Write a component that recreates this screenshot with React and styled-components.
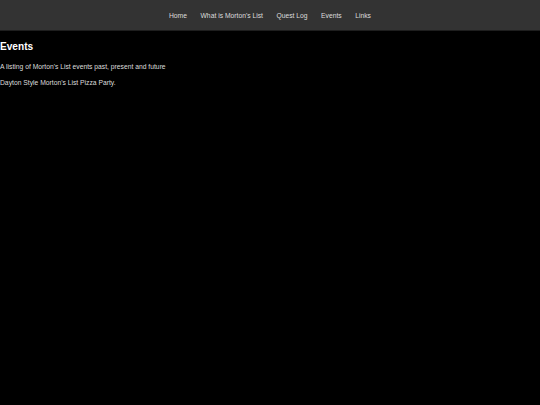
import React from "react";
import styled, { createGlobalStyle } from "styled-components";

const GlobalStyle = createGlobalStyle`
  html, body {
    margin: 0;
    padding: 0;
    background: #000;
  }
  body {
    font-family: "Liberation Sans", Arial, sans-serif;
    font-size: 6.75px;
    color: #ddd;
  }
`;

const links = ["Home", "What is Morton's List", "Quest Log", "Events", "Links"];

const App = () => (
  <Page>
    <GlobalStyle />
    <Header>
      <Nav>
        {links.map(l => (
          <NavItem key={l} href="#">
            {l}
          </NavItem>
        ))}
      </Nav>
    </Header>
    <Main>
      <Title>Events</Title>
      <Text>A listing of Morton's List events past, present and future</Text>
      <Text>Dayton Style Morton's List Pizza Party.</Text>
    </Main>
  </Page>
);

const Page = styled.div`
  min-height: 405px;
  background: #000;
`;

const Header = styled.header`
  height: 31px;
  padding-top: 3px;
  box-sizing: border-box;
  background: #333;
  border-bottom: 1px solid #1e1e1e;
  display: flex;
  align-items: center;
  justify-content: center;
`;

const Nav = styled.nav`
  display: flex;
  gap: 13.5px;
`;

const NavItem = styled.a`
  color: #ddd;
  text-decoration: none;
  font-size: 6.75px;
  line-height: 1;
`;

const Main = styled.main`
  padding: 0;
`;

const Title = styled.h2`
  margin: 10px 0 10px;
  font-size: 10.1px;
  font-weight: bold;
  color: #fff;
  line-height: 12px;
`;

const Text = styled.p`
  margin: 0 0 8px;
  line-height: 8px;
  color: #ddd;
`;

export default App;
